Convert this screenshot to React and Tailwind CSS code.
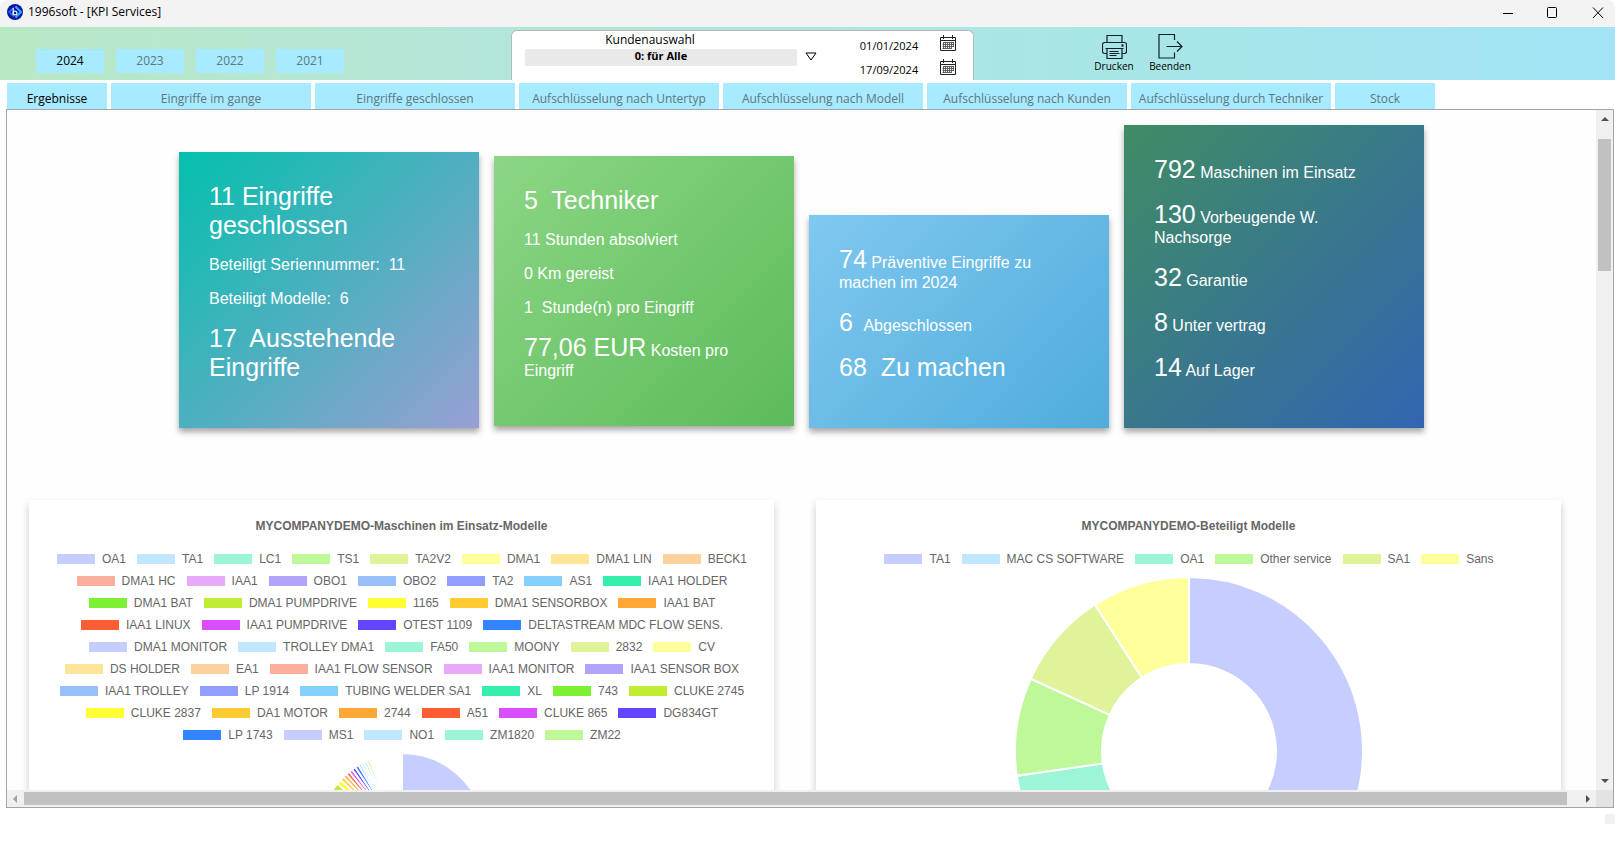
import React from "react";

const PALETTE = [
  "#c6cdff", "#c0e7ff", "#9bf5d6", "#bef898", "#dff39b", "#ffff9b",
  "#ffe598", "#fdd19b", "#fbaf9b", "#e8a9fb", "#b0a5fb", "#97c0fb",
  "#919dff", "#81d0ff", "#34eeac", "#7cf134", "#bfed34", "#ffff34",
  "#ffcb31", "#ffa734", "#ff5e34", "#d94fff", "#6145ff", "#3385ff",
];

const YEARS = ["2024", "2023", "2022", "2021"];

const TABS = [
  { label: "Ergebnisse", width: "w-[100px]" },
  { label: "Eingriffe im gange", width: "w-[200px]" },
  { label: "Eingriffe geschlossen", width: "w-[200px]" },
  { label: "Aufschlüsselung nach Untertyp", width: "w-[200px]" },
  { label: "Aufschlüsselung nach Modell", width: "w-[200px]" },
  { label: "Aufschlüsselung nach Kunden", width: "w-[200px]" },
  { label: "Aufschlüsselung durch Techniker", width: "w-[200px]" },
  { label: "Stock", width: "w-[100px]" },
];

const MACHINES = [
  "OA1", "TA1", "LC1", "TS1", "TA2V2", "DMA1", "DMA1 LIN", "BECK1",
  "DMA1 HC", "IAA1", "OBO1", "OBO2", "TA2", "AS1", "IAA1 HOLDER",
  "DMA1 BAT", "DMA1 PUMPDRIVE", "1165", "DMA1 SENSORBOX", "IAA1 BAT",
  "IAA1 LINUX", "IAA1 PUMPDRIVE", "OTEST 1109", "DELTASTREAM MDC FLOW SENS.",
  "DMA1 MONITOR", "TROLLEY DMA1", "FA50", "MOONY", "2832", "CV",
  "DS HOLDER", "EA1", "IAA1 FLOW SENSOR", "IAA1 MONITOR", "IAA1 SENSOR BOX",
  "IAA1 TROLLEY", "LP 1914", "TUBING WELDER SA1", "XL", "743", "CLUKE 2745",
  "CLUKE 2837", "DA1 MOTOR", "2744", "A51", "CLUKE 865", "DG834GT",
  "LP 1743", "MS1", "NO1", "ZM1820", "ZM22",
];

const MODELS = ["TA1", "MAC CS SOFTWARE", "OA1", "Other service", "SA1", "Sans"];

function ring(r, from, to) {
  const at = (radius, deg) => {
    const a = (deg * Math.PI) / 180;
    return `${r + radius * Math.sin(a)} ${r - radius * Math.cos(a)}`;
  };
  const large = to - from > 180 ? 1 : 0;
  const inner = r / 2;
  return `M${at(r, from)}A${r} ${r} 0 ${large} 1 ${at(r, to)}L${at(inner, to)}A${inner} ${inner} 0 ${large} 0 ${at(inner, from)}Z`;
}

function Doughnut({ r, slices, className, label }) {
  return (
    <svg viewBox={`0 0 ${2 * r} ${2 * r}`} className={className} role="img" aria-label={label}>
      {slices.map(([from, to, color]) => (
        <path key={from} d={ring(r, from, to)} fill={color} stroke="#fff" strokeWidth="2" />
      ))}
    </svg>
  );
}

const MACHINE_EDGES = [303, 309.5, 313, 315.8, 318.4, 321, 323.6, 326.2, 328.8, 331, 333, 335, 337];
const MACHINE_SLICES = [
  [0, 80, PALETTE[0]],
  ...MACHINE_EDGES.slice(0, -1).map((edge, i) => [edge, MACHINE_EDGES[i + 1], PALETTE[(16 + i) % 24]]),
];

const UNIT = 360 / 11;
const MODEL_SLICES = [
  [0, 6 * UNIT, PALETTE[0]],
  ...[6, 7, 8, 9, 10].map((n, i) => [n * UNIT, (n + 1) * UNIT, PALETTE[i + 1]]),
];

function Legend({ items }) {
  return (
    <ul className="mt-[17px] flex flex-wrap justify-center gap-[10px]">
      {items.map((name, i) => (
        <li key={name} className="flex h-3 items-center gap-[7px] pl-px text-[12px] leading-3 whitespace-nowrap">
          <span className="h-[10px] w-[38px]" style={{ backgroundColor: PALETTE[i % 24] }} />
          {name}
        </li>
      ))}
    </ul>
  );
}

function ChartPanel({ title, items, children }) {
  return (
    <section className="flex h-[640px] min-w-0 flex-1 flex-col bg-white px-4 pt-4 text-[#666] shadow-[0_4px_8px_rgba(0,0,0,0.2)]">
      <h2 className="text-center text-[12px] leading-5 font-bold">{title}</h2>
      <Legend items={items} />
      {children}
    </section>
  );
}

const Big = ({ children }) => <span className="text-[25px] leading-[29px]">{children}</span>;
const Line = ({ children }) => <p className="mb-4 text-[16px] leading-[18px]">{children}</p>;
const BigLine = ({ children }) => <p className="mb-4 text-[25px] leading-[29px]">{children}</p>;

function Card({ tone, children }) {
  return (
    <article className={`w-[300px] p-[30px] text-white shadow-[0_4px_6px_rgba(0,0,0,0.35)] ${tone}`}>
      {children}
    </article>
  );
}

function CalendarIcon() {
  return (
    <svg viewBox="0 0 16 16" className="size-4" fill="none" stroke="#222" aria-hidden="true">
      <path d="M.5 2.5h15v13H.5zM.5 5.5h15" />
      <path d="M3.5 0v4M12.5 0v4" />
      <path d="M3 7.5h11M2.5 9.5h11.5M2.5 11.5h11.5M2.5 13.5h9M3.5 7v7M5.5 7v7M7.500 7v7M9.500 7v7M11.500 7v7M13.500 7v5" stroke="#555" strokeWidth=".9" />
    </svg>
  );
}

function DateField({ id, label, value }) {
  return (
    <div className="flex h-6 items-center">
      <label htmlFor={id} className="sr-only">{label}</label>
      <input id={id} defaultValue={value} className="h-5 w-[70px] bg-transparent text-center text-[11px] leading-5 text-black outline-none" />
      <button type="button" aria-label={`${label} wählen`} className="ml-4 pb-1.5">
        <CalendarIcon />
      </button>
    </div>
  );
}

export default function App() {
  return (
    <div className="flex h-screen flex-col overflow-hidden bg-white font-['Open_Sans','Noto_Sans',sans-serif] text-black">
      <header className="flex h-[27px] shrink-0 items-start justify-between rounded-t-lg bg-[#f3f3f3] pl-[7px]">
        <div className="flex items-center gap-[5px] pt-1">
          <svg viewBox="0 0 16 16" className="size-4" aria-hidden="true">
            <circle cx="8" cy="8" r="8" fill="#0a17a6" />
            <path d="M8.500 2.500 14 8l-5.500 5.500" fill="none" stroke="#35b6f5" strokeWidth="1.800" />
            <path d="M7 3.500 2 8l5 4.500" fill="none" stroke="#2b7fe0" strokeWidth="1.200" />
            <path d="M6.200 4v7" stroke="#e8f4ff" strokeWidth="1.200" />
            <circle cx="8" cy="9" r="1.900" fill="none" stroke="#e8f4ff" strokeWidth="1.200" />
          </svg>
          <h1 className="text-[12px] leading-4">1996soft - [KPI Services]</h1>
        </div>
        <div className="flex">
          <button type="button" aria-label="Minimieren" className="flex h-[26px] w-[45px] items-center justify-center">
            <svg viewBox="0 0 12 12" className="size-3"><path d="M1 6.500h10" stroke="#000" /></svg>
          </button>
          <button type="button" aria-label="Maximieren" className="flex h-[26px] w-[45px] items-center justify-center">
            <svg viewBox="0 0 12 12" className="size-3"><rect x=".5" y=".5" width="9" height="10" rx="1" fill="none" stroke="#000" /></svg>
          </button>
          <button type="button" aria-label="Schließen" className="flex h-[26px] w-[40px] items-center justify-end pr-[11px]">
            <svg viewBox="0 0 12 12" className="size-3"><path d="m1 .5 10 10.500M11 .5 1 11" stroke="#000" /></svg>
          </button>
        </div>
      </header>

      <div className="flex h-[53px] shrink-0 items-start bg-[linear-gradient(90deg,#b9e8c6_0%,#b3e6da_31%,#a9e6e4_64%,#a2e3f5_100%)] pl-9">
        <nav aria-label="Jahr" className="flex gap-3 pt-[22px]">
          {YEARS.map((year, i) => (
            <button
              key={year}
              type="button"
              className={`h-6 w-[68px] bg-[#a8eaff] text-[12px] leading-6 ${i === 0 ? "text-black" : "text-[#5c7880]"}`}
            >
              {year}
            </button>
          ))}
        </nav>

        <form className="ml-[167px] flex h-[50px] w-[463px] shrink-0 self-end rounded-t-md border border-b-0 border-[#b9b9b9] bg-white pl-[13px]">
          <div className="w-[272px]">
            <label htmlFor="kunde" className="block pr-[22px] text-center text-[12px] leading-[18px]">Kundenauswahl</label>
            <select
              id="kunde"
              className="block h-[17px] w-full appearance-none rounded-xs bg-[#e9e9e9] pb-[3px] text-center text-[11px] leading-[14px] font-bold outline-none [text-align-last:center]"
            >
              <option>0: für Alle</option>
            </select>
          </div>
          <svg viewBox="0 0 12 9" className="mt-[21px] ml-2 h-[9px] w-3" fill="none" stroke="#000" aria-hidden="true">
            <path d="M1 1h10L6 8z" />
          </svg>
          <div className="ml-[37px] pt-[3px]">
            <DateField id="von" label="Startdatum" value="01/01/2024" />
            <DateField id="bis" label="Enddatum" value="17/09/2024" />
          </div>
        </form>

        <div className="ml-[115px] flex gap-1.5 pt-[7px]">
          <button type="button" className="flex w-[50px] flex-col items-center text-[10px] leading-3">
            <svg viewBox="0 0 25 26" className="h-[26px] w-[25px]" fill="none" stroke="#0c2228" strokeWidth="1.200" aria-hidden="true">
              <path d="M5 8V1.500h15V8" />
              <path d="M5 19.500H2.500a2 2 0 0 1-2-2v-7a2 2 0 0 1 2-2h20a2 2 0 0 1 2 2v7a2 2 0 0 1-2 2H20" />
              <path d="M3.500 14.500h18M5 14.500v10h15v-10M7.500 17.500h9M7.500 19.500h10M7.500 21.500h7" />
              <circle cx="20.500" cy="11.500" r=".6" fill="#0c2228" />
            </svg>
            Drucken
          </button>
          <button type="button" className="flex w-[50px] flex-col items-center text-[10px] leading-3">
            <svg viewBox="0 0 25 26" className="h-[26px] w-[25px]" fill="none" stroke="#0c2228" strokeWidth="1.200" aria-hidden="true">
              <path d="M16.500 6V.5H1v23.500h15.500v-5.500" />
              <path d="M8.500 12.500h15M19 7.500l5 5-5 5" />
            </svg>
            Beenden
          </button>
        </div>
      </div>

      <nav aria-label="Bereiche" className="mt-[3px] flex shrink-0 gap-1 pl-[7px]">
        {TABS.map(({ label, width }, i) => (
          <button
            key={label}
            type="button"
            className={`h-[26px] shrink-0 bg-[#a8eaff] pt-1.5 text-[12px] leading-5 whitespace-nowrap ${width} ${i === 0 ? "text-black" : "text-[#5c7880]"}`}
          >
            {label}
          </button>
        ))}
      </nav>

      <div className="mr-[1px] ml-[6px] grid min-h-0 flex-1 grid-cols-[minmax(0,1fr)_17px] grid-rows-[minmax(0,1fr)_17px] border border-[#a5a5a5]">
        <main className="overflow-hidden bg-[#fefefe] pt-[15px] font-['Liberation_Sans',Arial,sans-serif]">
          <div className="flex justify-center gap-[15px] [align-items:last_baseline]">
            <Card tone="bg-[linear-gradient(135deg,#03c0ad,#999fd3)]">
              <BigLine>11 Eingriffe geschlossen</BigLine>
              <Line>Beteiligt Seriennummer:&nbsp; 11</Line>
              <Line>Beteiligt Modelle:&nbsp; 6</Line>
              <BigLine>17&nbsp; Ausstehende Eingriffe</BigLine>
            </Card>
            <Card tone="bg-[linear-gradient(135deg,#8cd685,#5cbb5a)]">
              <BigLine>5&nbsp; Techniker</BigLine>
              <Line>11 Stunden absolviert</Line>
              <Line>0 Km gereist</Line>
              <Line>1&nbsp; Stunde(n) pro Eingriff</Line>
              <Line><Big>77,06 EUR</Big> Kosten pro Eingriff</Line>
            </Card>
            <Card tone="bg-[linear-gradient(135deg,#80c8f0,#4facdb)]">
              <Line><Big>74</Big> Präventive Eingriffe zu machen im 2024</Line>
              <Line><Big>6&nbsp;</Big> Abgeschlossen</Line>
              <BigLine>68&nbsp; Zu machen</BigLine>
            </Card>
            <Card tone="bg-[linear-gradient(135deg,#408c65,#3265b0)]">
              <Line><Big>792</Big> Maschinen im Einsatz</Line>
              <Line><Big>130</Big> Vorbeugende W. Nachsorge</Line>
              <Line><Big>32</Big> Garantie</Line>
              <Line><Big>8</Big> Unter vertrag</Line>
              <Line><Big>14</Big> Auf Lager</Line>
            </Card>
          </div>

          <div className="mt-[72px] flex gap-[42px] pr-[35px] pl-[22px]">
            <ChartPanel title="MYCOMPANYDEMO-Maschinen im Einsatz-Modelle" items={MACHINES}>
              <Doughnut r={84} slices={MACHINE_SLICES} className="mt-3 size-[168px] shrink-0 self-center" label="Maschinen im Einsatz nach Modell" />
            </ChartPanel>
            <ChartPanel title="MYCOMPANYDEMO-Beteiligt Modelle" items={MODELS}>
              <Doughnut r={174} slices={MODEL_SLICES} className="mt-3 size-[348px] shrink-0 self-center" label="Beteiligte Modelle" />
            </ChartPanel>
          </div>
        </main>

        <div className="flex flex-col items-center justify-between bg-[#f0f0f0]" aria-hidden="true">
          <div className="flex flex-col items-center">
            <svg viewBox="0 0 8 4" className="mt-[7px] mb-[18px] h-1 w-2"><path d="M4 0 8 4H0z" fill="#505050" /></svg>
            <div className="h-[132px] w-[13px] bg-[#c1c1c1]" />
          </div>
          <svg viewBox="0 0 8 4" className="mb-[7px] h-1 w-2"><path d="M0 0h8L4 4z" fill="#505050" /></svg>
        </div>
        <div className="flex items-center bg-[#f0f0f0]" aria-hidden="true">
          <svg viewBox="0 0 4 8" className="mr-[7px] ml-[6px] h-2 w-1"><path d="M4 0v8L0 4z" fill="#a0a0a0" /></svg>
          <div className="h-[13px] flex-1 bg-[#c1c1c1]" />
          <svg viewBox="0 0 4 8" className="mr-[6px] ml-[19px] h-2 w-1"><path d="M0 0v8l4-4z" fill="#505050" /></svg>
        </div>
        <div className="bg-[#e3e3e3]" />
      </div>

      <footer className="flex h-[46px] shrink-0 justify-end pt-[6px]">
        <div className="h-[10px] w-[10px] bg-[#f0f0f0]" />
      </footer>
    </div>
  );
}
